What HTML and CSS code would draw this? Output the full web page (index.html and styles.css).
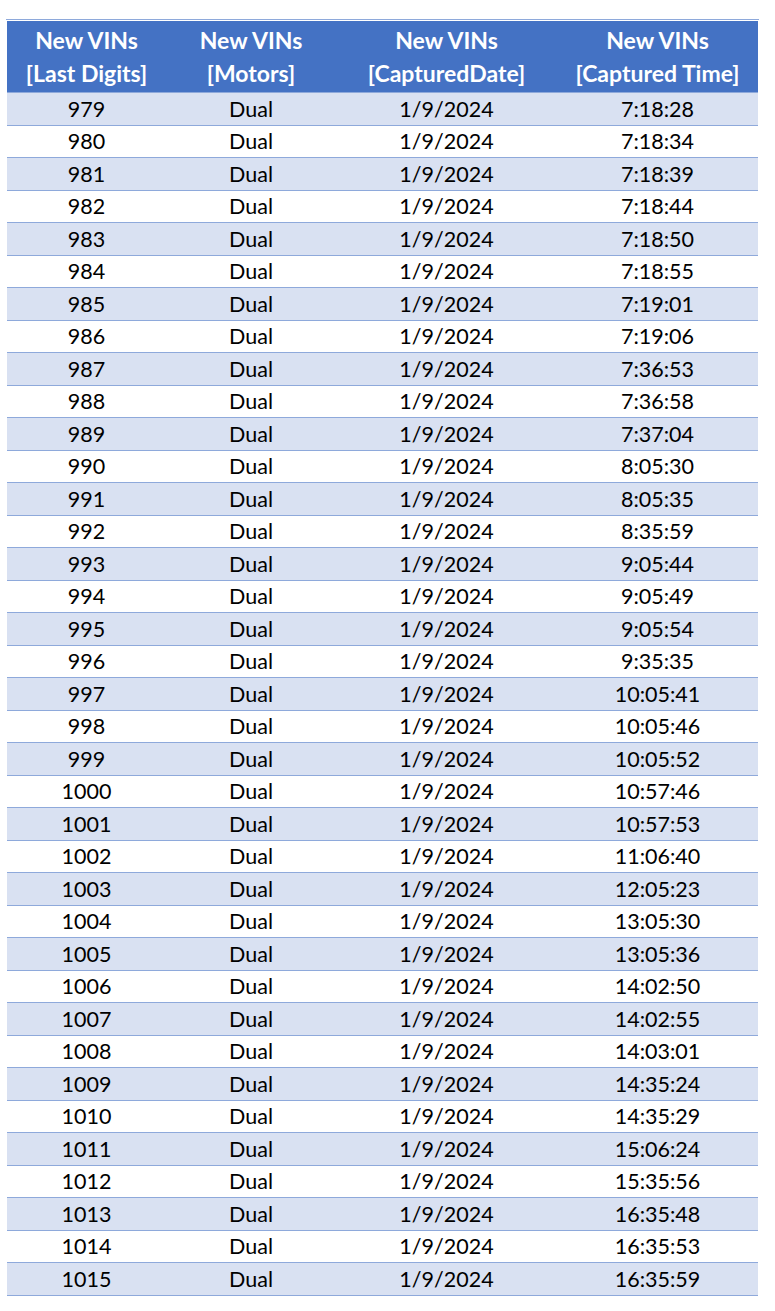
FILE: index.html
```html
<!DOCTYPE html>
<html>
<head>
<meta charset="utf-8">
<link rel="stylesheet" href="styles.css">
</head>
<body>
<div class="sheet">
<table class="vins">
  <colgroup>
    <col class="c1"><col class="c2"><col class="c3"><col class="c4">
  </colgroup>
  <thead>
    <tr><th>New VINs<br>[Last Digits]</th><th>New VINs<br>[Motors]</th><th>New VINs<br>[CapturedDate]</th><th>New VINs<br>[Captured Time]</th></tr>
  </thead>
  <tbody>
    <tr><td>979</td><td>Dual</td><td>1/9/2024</td><td>7:18:28</td></tr>
    <tr><td>980</td><td>Dual</td><td>1/9/2024</td><td>7:18:34</td></tr>
    <tr><td>981</td><td>Dual</td><td>1/9/2024</td><td>7:18:39</td></tr>
    <tr><td>982</td><td>Dual</td><td>1/9/2024</td><td>7:18:44</td></tr>
    <tr><td>983</td><td>Dual</td><td>1/9/2024</td><td>7:18:50</td></tr>
    <tr><td>984</td><td>Dual</td><td>1/9/2024</td><td>7:18:55</td></tr>
    <tr><td>985</td><td>Dual</td><td>1/9/2024</td><td>7:19:01</td></tr>
    <tr><td>986</td><td>Dual</td><td>1/9/2024</td><td>7:19:06</td></tr>
    <tr><td>987</td><td>Dual</td><td>1/9/2024</td><td>7:36:53</td></tr>
    <tr><td>988</td><td>Dual</td><td>1/9/2024</td><td>7:36:58</td></tr>
    <tr><td>989</td><td>Dual</td><td>1/9/2024</td><td>7:37:04</td></tr>
    <tr><td>990</td><td>Dual</td><td>1/9/2024</td><td>8:05:30</td></tr>
    <tr><td>991</td><td>Dual</td><td>1/9/2024</td><td>8:05:35</td></tr>
    <tr><td>992</td><td>Dual</td><td>1/9/2024</td><td>8:35:59</td></tr>
    <tr><td>993</td><td>Dual</td><td>1/9/2024</td><td>9:05:44</td></tr>
    <tr><td>994</td><td>Dual</td><td>1/9/2024</td><td>9:05:49</td></tr>
    <tr><td>995</td><td>Dual</td><td>1/9/2024</td><td>9:05:54</td></tr>
    <tr><td>996</td><td>Dual</td><td>1/9/2024</td><td>9:35:35</td></tr>
    <tr><td>997</td><td>Dual</td><td>1/9/2024</td><td>10:05:41</td></tr>
    <tr><td>998</td><td>Dual</td><td>1/9/2024</td><td>10:05:46</td></tr>
    <tr><td>999</td><td>Dual</td><td>1/9/2024</td><td>10:05:52</td></tr>
    <tr><td>1000</td><td>Dual</td><td>1/9/2024</td><td>10:57:46</td></tr>
    <tr><td>1001</td><td>Dual</td><td>1/9/2024</td><td>10:57:53</td></tr>
    <tr><td>1002</td><td>Dual</td><td>1/9/2024</td><td>11:06:40</td></tr>
    <tr><td>1003</td><td>Dual</td><td>1/9/2024</td><td>12:05:23</td></tr>
    <tr><td>1004</td><td>Dual</td><td>1/9/2024</td><td>13:05:30</td></tr>
    <tr><td>1005</td><td>Dual</td><td>1/9/2024</td><td>13:05:36</td></tr>
    <tr><td>1006</td><td>Dual</td><td>1/9/2024</td><td>14:02:50</td></tr>
    <tr><td>1007</td><td>Dual</td><td>1/9/2024</td><td>14:02:55</td></tr>
    <tr><td>1008</td><td>Dual</td><td>1/9/2024</td><td>14:03:01</td></tr>
    <tr><td>1009</td><td>Dual</td><td>1/9/2024</td><td>14:35:24</td></tr>
    <tr><td>1010</td><td>Dual</td><td>1/9/2024</td><td>14:35:29</td></tr>
    <tr><td>1011</td><td>Dual</td><td>1/9/2024</td><td>15:06:24</td></tr>
    <tr><td>1012</td><td>Dual</td><td>1/9/2024</td><td>15:35:56</td></tr>
    <tr><td>1013</td><td>Dual</td><td>1/9/2024</td><td>16:35:48</td></tr>
    <tr><td>1014</td><td>Dual</td><td>1/9/2024</td><td>16:35:53</td></tr>
    <tr><td>1015</td><td>Dual</td><td>1/9/2024</td><td>16:35:59</td></tr>
  </tbody>
</table>
</div>
</body>
</html>
```

FILE: styles.css
```css
html, body {
  margin: 0;
  padding: 0;
  background: #ffffff;
}
body {
  padding: 19px 0 0 6px;
  font-family: Lato, "Open Sans", "Liberation Sans", sans-serif;
}
.sheet {
  width: 752px;
  border-top: 1px solid #8ea9db;
  padding: 1px 0 0 1px;
}
.vins {
  border-collapse: collapse;
  table-layout: fixed;
  width: 751px;
}
.c1 { width: 159px; }
.c2 { width: 170px; }
.c3 { width: 221px; }
.c4 { width: 201px; }
.vins th {
  background: #4472c4;
  color: #ffffff;
  font-weight: 700;
  font-size: 23px;
  line-height: 33px;
  height: 71px;
  padding: 0;
  text-align: center;
  vertical-align: middle;
  border-bottom: 1px solid #8ea9db;
}
.vins td {
  font-size: 21.5px;
  color: #000000;
  text-align: center;
  vertical-align: middle;
  height: 31.5px;
  padding: 0;
  border-bottom: 1px solid #8ea9db;
}
.vins tbody tr:nth-child(odd) td {
  background: #d9e1f2;
}
```
